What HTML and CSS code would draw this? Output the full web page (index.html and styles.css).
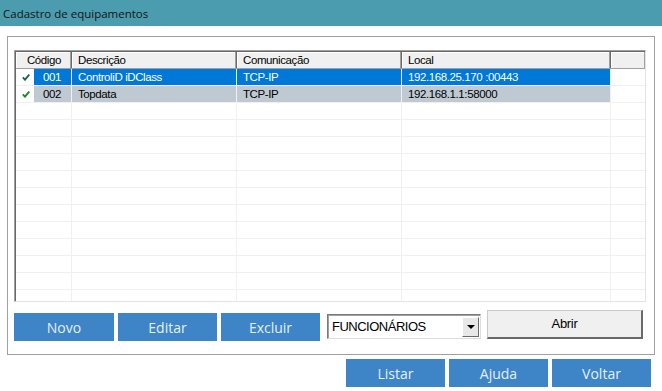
FILE: index.html
```html
<!DOCTYPE html>
<html lang="pt-BR">
<head>
    <meta charset="UTF-8">
    <meta name="viewport" content="width=device-width, initial-scale=1.0">
    <title>Cadastro de equipamentos</title>
    <link rel="stylesheet" href="styles.css">
</head>
<body>
    <div class="window">
        <div class="titlebar">Cadastro de equipamentos</div>

        <div class="group">
            <!-- Grid de equipamentos -->
            <div class="grid-frame">
                <div class="grid">
                    <div class="head">
                        <div class="hcell hcode">Código</div>
                        <div class="hcell">Descrição</div>
                        <div class="hcell">Comunicação</div>
                        <div class="hcell">Local</div>
                        <div class="hcell hlast"></div>
                    </div>

                    <div class="row selected">
                        <div class="cell mark">
                            <svg width="8" height="7" viewBox="0 0 8 7"><path d="M0.8 3.4 L3 5.7 L7.3 0.7" fill="none" stroke="#17665c" stroke-width="1.9"/></svg>
                        </div>
                        <div class="cell code">001</div>
                        <div class="cell">ControliD iDClass</div>
                        <div class="cell">TCP-IP</div>
                        <div class="cell">192.168.25.170 :00443</div>
                        <div class="cell blank"></div>
                    </div>
                    <div class="row inactive">
                        <div class="cell mark">
                            <svg width="8" height="7" viewBox="0 0 8 7"><path d="M0.8 3.4 L3 5.7 L7.3 0.7" fill="none" stroke="#1c8a2c" stroke-width="1.9"/></svg>
                        </div>
                        <div class="cell code">002</div>
                        <div class="cell">Topdata</div>
                        <div class="cell">TCP-IP</div>
                        <div class="cell">192.168.1.1:58000</div>
                        <div class="cell blank"></div>
                    </div>

                    <div class="row"><div class="cell mark"></div><div class="cell code"></div><div class="cell"></div><div class="cell"></div><div class="cell"></div><div class="cell blank"></div></div>
                    <div class="row"><div class="cell mark"></div><div class="cell code"></div><div class="cell"></div><div class="cell"></div><div class="cell"></div><div class="cell blank"></div></div>
                    <div class="row"><div class="cell mark"></div><div class="cell code"></div><div class="cell"></div><div class="cell"></div><div class="cell"></div><div class="cell blank"></div></div>
                    <div class="row"><div class="cell mark"></div><div class="cell code"></div><div class="cell"></div><div class="cell"></div><div class="cell"></div><div class="cell blank"></div></div>
                    <div class="row"><div class="cell mark"></div><div class="cell code"></div><div class="cell"></div><div class="cell"></div><div class="cell"></div><div class="cell blank"></div></div>
                    <div class="row"><div class="cell mark"></div><div class="cell code"></div><div class="cell"></div><div class="cell"></div><div class="cell"></div><div class="cell blank"></div></div>
                    <div class="row"><div class="cell mark"></div><div class="cell code"></div><div class="cell"></div><div class="cell"></div><div class="cell"></div><div class="cell blank"></div></div>
                    <div class="row"><div class="cell mark"></div><div class="cell code"></div><div class="cell"></div><div class="cell"></div><div class="cell"></div><div class="cell blank"></div></div>
                    <div class="row"><div class="cell mark"></div><div class="cell code"></div><div class="cell"></div><div class="cell"></div><div class="cell"></div><div class="cell blank"></div></div>
                    <div class="row"><div class="cell mark"></div><div class="cell code"></div><div class="cell"></div><div class="cell"></div><div class="cell"></div><div class="cell blank"></div></div>
                    <div class="row"><div class="cell mark"></div><div class="cell code"></div><div class="cell"></div><div class="cell"></div><div class="cell"></div><div class="cell blank"></div></div>
                    <div class="row"><div class="cell mark"></div><div class="cell code"></div><div class="cell"></div><div class="cell"></div><div class="cell"></div><div class="cell blank"></div></div>
                    <div class="row"><div class="cell mark"></div><div class="cell code"></div><div class="cell"></div><div class="cell"></div><div class="cell"></div><div class="cell blank"></div></div>
                </div>
            </div>

            <div class="toolbar">
                <button class="btn btn-novo">Novo</button>
                <button class="btn">Editar</button>
                <button class="btn">Excluir</button>
                <div class="combo">
                    <span class="combo-text">FUNCIONÁRIOS</span>
                    <span class="combo-arrow"></span>
                </div>
                <button class="btn-classic">Abrir</button>
            </div>
        </div>

        <div class="footer">
            <button class="btn">Listar</button>
            <button class="btn">Ajuda</button>
            <button class="btn">Voltar</button>
        </div>
    </div>
</body>
</html>
```

FILE: styles.css
```css
* {
    box-sizing: border-box;
    margin: 0;
    padding: 0;
}

body {
    width: 662px;
    height: 391px;
    background: #ffffff;
    overflow: hidden;
    font-family: 'Liberation Sans', Arial, sans-serif;
}

.titlebar {
    height: 26px;
    background: #4a9cae;
    color: #141414;
    font-family: 'Open Sans', 'Noto Sans', sans-serif;
    font-size: 11.5px;
    line-height: 27px;
    padding-left: 3px;
}

.group {
    margin: 10px 7px 0 7px;
    height: 319px;
    border: 1px solid #a0a0a0;
    padding: 13px 8px 0 6px;
}

/* grid */
.grid-frame {
    height: 252px;
    border-top: 1px solid #a0a0a0;
    border-left: 1px solid #a0a0a0;
    border-right: 1px solid #e3e3e3;
    border-bottom: 1px solid #e3e3e3;
}

.grid {
    height: 100%;
    overflow: hidden;
    border-top: 1px solid #696969;
    border-left: 1px solid #696969;
    font-size: 11.5px;
    letter-spacing: -0.4px;
    color: #000;
}

.head {
    display: grid;
    grid-template-columns: 56px 165px 165px 209px 1fr;
    height: 17px;
    background: #f0f0f0;
    border-bottom: 1px solid #a0a0a0;
}

.hcell {
    line-height: 16px;
    padding-left: 6px;
    border-right: 1px solid #696969;
    box-shadow: inset -1px 0 #a0a0a0, inset 1px 1px #ffffff;
    white-space: nowrap;
}

.hcode {
    text-align: right;
    padding-right: 10px;
}

.hlast {
    border-right: none;
}

.row {
    display: grid;
    grid-template-columns: 18px 38px 165px 165px 209px 1fr;
    height: 17px;
    border-bottom: 1px solid #f0f0f0;
}

.cell {
    line-height: 16px;
    padding-left: 6px;
    border-right: 1px solid #f0f0f0;
    white-space: nowrap;
}

.mark {
    padding: 0;
    border-right: none;
    display: flex;
    align-items: center;
    justify-content: center;
    padding-left: 2px;
}

.code {
    text-align: right;
    padding-right: 10px;
}

.blank {
    border-right: none;
}

.selected .cell:not(.mark):not(.blank) {
    background: #0078d7;
    color: #ffffff;
    border-right-color: #e6eef6;
}

.inactive .cell:not(.mark):not(.blank) {
    background: #bfc9d2;
}

/* buttons */
.toolbar {
    display: flex;
    align-items: flex-start;
    margin-top: 8px;
}

.btn {
    width: 99px;
    height: 28px;
    border: none;
    background: #3d85c6;
    color: #e6eff9;
    font-family: 'Open Sans', 'Noto Sans', sans-serif;
    font-size: 14px;
    margin-right: 4px;
}

.toolbar .btn {
    margin-top: 3px;
}

.toolbar .btn-novo {
    width: 100px;
}

.combo {
    display: flex;
    align-items: center;
    width: 154px;
    height: 25px;
    margin: 4px 6px 0 3px;
    border: 1px solid #7a7a7a;
    border-right-color: #dcdcdc;
    border-bottom-color: #dcdcdc;
    box-shadow: inset 1px 1px #a0a0a0;
    background: #ffffff;
    padding: 1px 1px 1px 4px;
}

.combo-text {
    flex: 1;
    font-size: 13px;
    letter-spacing: -0.5px;
    color: #000;
}

.combo-arrow {
    width: 17px;
    height: 20px;
    background: #e8e8e8;
    border: 1px solid #ffffff;
    border-right-color: #696969;
    border-bottom-color: #696969;
    display: flex;
    align-items: center;
    justify-content: center;
}

.combo-arrow::after {
    content: '';
    border-left: 4px solid transparent;
    border-right: 4px solid transparent;
    border-top: 4px solid #000;
}

.btn-classic {
    width: 156px;
    height: 29px;
    background: #f0f0f0;
    border: 1px solid #c8c8c8;
    border-right: 2px solid #696969;
    border-bottom: 2px solid #696969;
    font-family: 'Liberation Sans', Arial, sans-serif;
    font-size: 13px;
    letter-spacing: -0.3px;
    color: #000;
    padding-bottom: 2px;
}

.footer {
    display: flex;
    justify-content: flex-end;
    margin-top: 4px;
    padding-right: 7px;
}
```
